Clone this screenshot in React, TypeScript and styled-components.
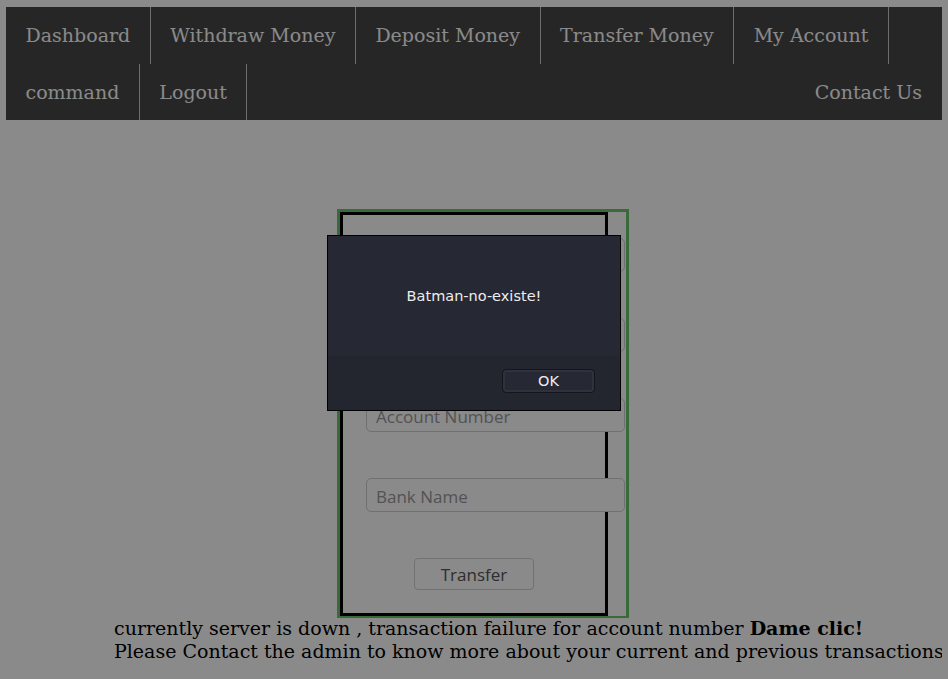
import styled, { createGlobalStyle } from 'styled-components';

const GlobalStyle = createGlobalStyle`
  html, body {
    margin: 0;
    background: #ffffff;
  }

  body {
    padding: 7px 6px;
    font-family: "DejaVu Serif", serif;
    font-size: 19px;
  }
`;

const Page = styled.div`
  overflow: hidden;
`;

const NavBar = styled.nav`
  display: flex;
  flex-wrap: wrap;
  background-color: #464646;
`;

const NavItem = styled.a<{ $right?: boolean }>`
  display: block;
  padding: 17px 19.5px;
  line-height: 22.5px;
  font-size: 19px;
  color: #ffffff;
  text-decoration: none;
  border-right: ${({ $right }) => ($right ? 'none' : '1px solid #cccccc')};
  margin-left: ${({ $right }) => ($right ? 'auto' : '0')};
  padding-right: ${({ $right }) => ($right ? '20px' : '19.5px')};
`;

const Main = styled.main`
  padding-top: 89px;
`;

const FormFrame = styled.div`
  width: 286px;
  margin-left: 331px;
  border: 3px solid #6bc46b;
  border-bottom-width: 2px;
`;

const FormBox = styled.form`
  width: 216px;
  padding: 23px;
  border: 3px solid #000000;
  display: flex;
  flex-direction: column;
  gap: 46px;
`;

const Field = styled.input`
  box-sizing: border-box;
  width: 259px;
  height: 34px;
  padding: 2px 9px 0;
  border: 1px solid #d0d0d0;
  border-radius: 5px;
  background: #ffffff;
  font-family: "Open Sans", sans-serif;
  font-size: 17px;
  color: #222;

  &::placeholder {
    color: #999999;
  }
`;

const SubmitButton = styled.button`
  align-self: center;
  width: 120px;
  height: 32px;
  border: 1px solid #d2d2d2;
  border-radius: 4px;
  background: #ffffff;
  font-family: "Open Sans", sans-serif;
  font-size: 17px;
  color: #555555;
`;

const Notice = styled.div`
  margin-left: 108px;
  margin-top: -1px;
  white-space: nowrap;
  font-size: 19px;
  line-height: 23px;
  color: #000000;
`;

const Backdrop = styled.div`
  position: fixed;
  inset: 0;
  background: rgba(0, 0, 0, 0.46);
`;

const Dialog = styled.div`
  position: fixed;
  top: 235px;
  left: 50%;
  transform: translateX(-50%);
  width: 292px;
  border: 1px solid #000000;
  background: #262834;
  font-family: "DejaVu Sans", sans-serif;
  color: #eeeeee;
`;

const DialogBody = styled.div`
  height: 120px;
  padding-top: 52px;
  box-sizing: border-box;
  text-align: center;
  font-size: 14.5px;
`;

const DialogFooter = styled.div`
  height: 54px;
  background: #23252f;
  display: flex;
  justify-content: flex-end;
  align-items: flex-start;
  padding: 13px 25px 0 0;
  box-sizing: border-box;
`;

const OkButton = styled.button`
  width: 93px;
  height: 24px;
  border: 1px solid #14161c;
  border-radius: 4px;
  background: #262834;
  box-shadow: inset 0 0 0 2px #2f323d;
  color: #eeeeee;
  font-family: "DejaVu Sans", sans-serif;
  font-size: 14.5px;
  padding: 0;
`;

const navLinks = ['Dashboard', 'Withdraw Money', 'Deposit Money', 'Transfer Money', 'My Account', 'command', 'Logout'];

export default function App() {
  return (
    <>
      <GlobalStyle />
      <Page>
        <NavBar>
          {navLinks.map((label) => (
            <NavItem key={label} href="#">{label}</NavItem>
          ))}
          <NavItem $right href="#">Contact Us</NavItem>
        </NavBar>
        <Main>
          <FormFrame>
            <FormBox onSubmit={(e) => e.preventDefault()}>
              <Field placeholder="Amount" />
              <Field placeholder="Account Holder Name" />
              <Field placeholder="Account Number" />
              <Field placeholder="Bank Name" />
              <SubmitButton type="submit">Transfer</SubmitButton>
            </FormBox>
          </FormFrame>
          <Notice>
            currently server is down , transaction failure for account number <b>Dame clic!</b>
            <br />
            Please Contact the admin to know more about your current and previous transactions
          </Notice>
        </Main>
      </Page>
      <Backdrop />
      <Dialog>
        <DialogBody>Batman-no-existe!</DialogBody>
        <DialogFooter>
          <OkButton>OK</OkButton>
        </DialogFooter>
      </Dialog>
    </>
  );
}
